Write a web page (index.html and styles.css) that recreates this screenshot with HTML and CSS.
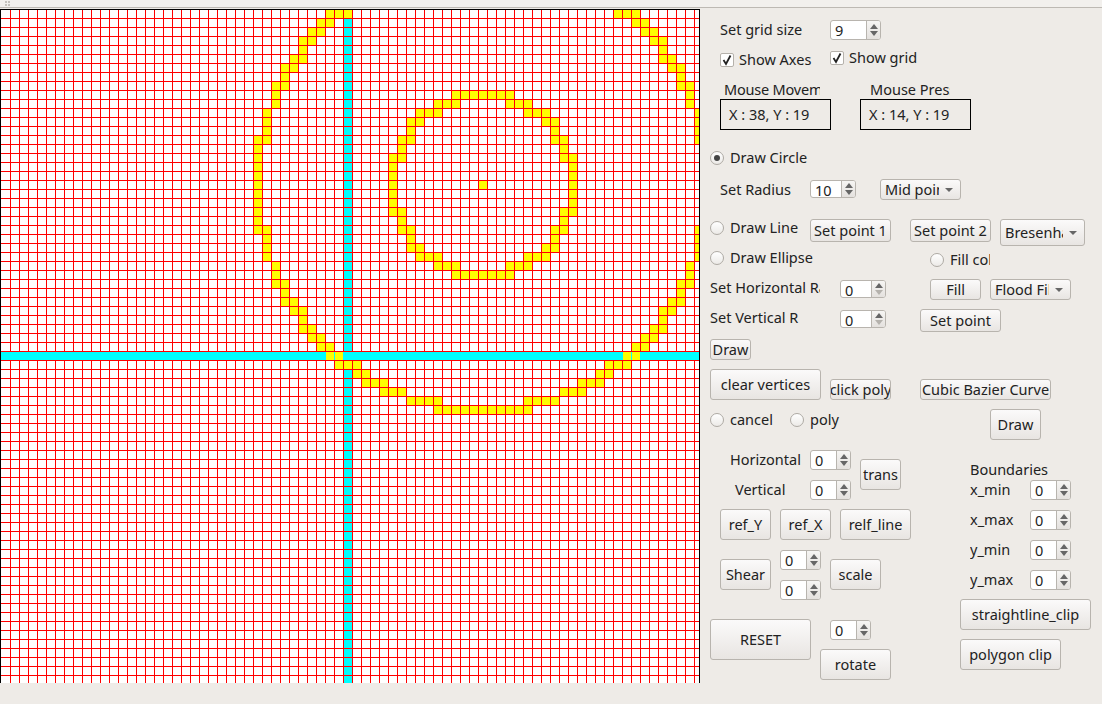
FILE: index.html
```html
<!DOCTYPE html>
<html lang="en">

<head>
    <meta charset="UTF-8">
    <title>Graphics</title>
    <link rel="stylesheet" href="styles.css">
</head>

<body>
    <div class="toolbar">
        <svg class="grip" width="6" height="7" viewBox="0 0 6 7">
            <rect x="0" y="0" width="2" height="2"/><rect x="3" y="0" width="2" height="2"/>
            <rect x="0" y="3" width="2" height="2"/><rect x="3" y="3" width="2" height="2"/>
        </svg>
    </div>
    <div class="main">
        <canvas id="frame" class="frame" width="700" height="674"></canvas>
        <div class="panel">
            <div class="label a-grid-label">Set grid size</div>
            <div class="spin a-grid-spin"><span class="val">9</span><span class="arrows"><i class="up"></i><i class="down"></i></span></div>
            <div class="check a-axes"><span class="box"><svg width="12" height="12" viewBox="0 0 12 12"><path d="M2.5 6 L5 10 L9.5 1.5"/></svg></span>Show Axes</div>
            <div class="check a-showgrid"><span class="box"><svg width="12" height="12" viewBox="0 0 12 12"><path d="M2.5 6 L5 10 L9.5 1.5"/></svg></span>Show grid</div>

            <div class="label a-move-label">Mouse Movement</div>
            <div class="label a-press-label">Mouse Pressed</div>
            <div class="readout a-move">X : 38, Y : 19</div>
            <div class="readout a-press">X : 14, Y : 19</div>

            <div class="radio a-circle"><span class="dot on"></span>Draw Circle</div>
            <div class="label a-radius-label">Set Radius</div>
            <div class="spin short a-radius-spin"><span class="val">10</span><span class="arrows"><i class="up"></i><i class="down"></i></span></div>
            <div class="combo a-circle-algo"><span class="combo-text">Mid point</span><i class="drop"></i></div>

            <div class="radio a-line"><span class="dot"></span>Draw Line</div>
            <div class="btn tall a-point1">Set point 1</div>
            <div class="btn tall a-point2">Set point 2</div>
            <div class="combo a-line-algo"><span class="combo-text">Bresenham</span><i class="drop"></i></div>
            <div class="radio a-ellipse"><span class="dot"></span>Draw Ellipse</div>
            <div class="radio a-fillcol"><span class="dot"></span>Fill color</div>

            <div class="label a-hr-label">Set Horizontal Radius</div>
            <div class="spin short at-min a-hr-spin"><span class="val">0</span><span class="arrows"><i class="up"></i><i class="down"></i></span></div>
            <div class="btn a-fill">Fill</div>
            <div class="combo a-fill-algo"><span class="combo-text">Flood Fill</span><i class="drop"></i></div>
            <div class="label a-vr-label">Set Vertical R</div>
            <div class="spin short at-min a-vr-spin"><span class="val">0</span><span class="arrows"><i class="up"></i><i class="down"></i></span></div>
            <div class="btn tall a-setpoint">Set point</div>
            <div class="btn a-draw1">Draw</div>

            <div class="btn a-clear">clear vertices</div>
            <div class="btn a-clickpoly">click poly</div>
            <div class="btn a-cubic">Cubic Bazier Curve</div>
            <div class="radio a-cancel"><span class="dot"></span>cancel</div>
            <div class="radio a-poly"><span class="dot"></span>poly</div>
            <div class="btn a-draw2">Draw</div>

            <div class="label a-h-label">Horizontal</div>
            <div class="spin a-h-spin"><span class="val">0</span><span class="arrows"><i class="up"></i><i class="down"></i></span></div>
            <div class="label a-v-label">Vertical</div>
            <div class="spin a-v-spin"><span class="val">0</span><span class="arrows"><i class="up"></i><i class="down"></i></span></div>
            <div class="btn a-trans">trans</div>

            <div class="label a-bound">Boundaries</div>
            <div class="label a-xmin-label">x_min</div>
            <div class="spin a-xmin"><span class="val">0</span><span class="arrows"><i class="up"></i><i class="down"></i></span></div>
            <div class="label a-xmax-label">x_max</div>
            <div class="spin a-xmax"><span class="val">0</span><span class="arrows"><i class="up"></i><i class="down"></i></span></div>
            <div class="label a-ymin-label">y_min</div>
            <div class="spin a-ymin"><span class="val">0</span><span class="arrows"><i class="up"></i><i class="down"></i></span></div>
            <div class="label a-ymax-label">y_max</div>
            <div class="spin a-ymax"><span class="val">0</span><span class="arrows"><i class="up"></i><i class="down"></i></span></div>

            <div class="btn a-refy">ref_Y</div>
            <div class="btn a-refx">ref_X</div>
            <div class="btn a-refl">relf_line</div>
            <div class="btn a-shear">Shear</div>
            <div class="spin a-shear1"><span class="val">0</span><span class="arrows"><i class="up"></i><i class="down"></i></span></div>
            <div class="spin a-shear2"><span class="val">0</span><span class="arrows"><i class="up"></i><i class="down"></i></span></div>
            <div class="btn a-scale">scale</div>
            <div class="btn a-reset">RESET</div>
            <div class="spin a-rot-spin"><span class="val">0</span><span class="arrows"><i class="up"></i><i class="down"></i></span></div>
            <div class="btn a-rotate">rotate</div>
            <div class="btn a-sclip">straightline_clip</div>
            <div class="btn a-pclip">polygon clip</div>
        </div>
    </div>
    <script src="script.js"></script>
</body>

</html>
```
FILE: styles.css
```css
* {
    margin: 0;
    padding: 0;
    box-sizing: border-box;
}

html, body {
    height: 100%;
    overflow: hidden;
}

body {
    background: #eeebe7;
    color: #222;
    font-family: "Noto Sans", "Liberation Sans", sans-serif;
    font-size: 14.5px;
}

.toolbar {
    height: 9px;
    background: #f2f0ed;
    box-shadow: inset 0 -1px 0 #eeebe7, inset 0 -2px 0 #bdb9b3;
    padding: 1px 0 0 5px;
}

.grip {
    display: block;
    fill: #c4c1bc;
}

.main {
    display: flex;
}

.frame {
    display: block;
    flex: none;
    width: 700px;
    height: 674px;
}

/* designer grid: every track is 10px, line n = 690+10n across, 10n down */
.panel {
    flex: none;
    width: 402px;
    padding-top: 1px;
    display: grid;
    grid-template-columns: repeat(40, 10px);
    grid-template-rows: repeat(68, 10px);
}

.label, .check, .radio {
    display: flex;
    align-items: center;
    padding-bottom: 2px;
    white-space: nowrap;
    overflow: hidden;
}

.check .box {
    flex: none;
    width: 14px;
    height: 14px;
    margin: 2px 5px 0 0;
    background: #fff;
    border: 1px solid #b5b1ab;
    border-radius: 2px;
    display: flex;
    align-items: center;
    justify-content: center;
}

.check svg {
    fill: none;
    stroke: #222;
    stroke-width: 1.8;
}

.radio .dot {
    flex: none;
    width: 14px;
    height: 14px;
    margin: 2px 6px 0 0;
    border: 1px solid #aeaaa4;
    border-radius: 50%;
    background: linear-gradient(#fff, #eceae7);
    display: flex;
    align-items: center;
    justify-content: center;
}

.radio .dot.on::after {
    content: "";
    width: 6px;
    height: 6px;
    border-radius: 50%;
    background: #444;
}

.readout {
    margin: -1px -1px 0 0;
    padding: 0 0 2px 8px;
    border: 1px solid #000;
    display: flex;
    align-items: center;
    white-space: nowrap;
}

.btn {
    margin: -1px -1px 0 0;
    padding-bottom: 2px;
    border: 1px solid #b8b4ae;
    border-radius: 3px;
    background: linear-gradient(#fbfafa, #e8e5e2);
    display: flex;
    align-items: center;
    justify-content: center;
    white-space: nowrap;
    overflow: hidden;
}

.btn.tall {
    margin-bottom: -2px;
}

.combo {
    margin: -1px -1px 0 0;
    padding-left: 4px;
    border: 1px solid #b8b4ae;
    border-radius: 3px;
    background: linear-gradient(#fbfafa, #e8e5e2);
    display: flex;
    align-items: center;
    white-space: nowrap;
}

.combo-text {
    flex: 1;
    overflow: hidden;
    padding-bottom: 2px;
}

.combo .drop {
    flex: none;
    margin: 0 7px 0 6px;
    border-left: 4px solid transparent;
    border-right: 4px solid transparent;
    border-top: 4px solid #666;
}

.spin {
    margin-right: -1px;
    border: 1px solid #b8b4ae;
    border-radius: 3px;
    background: #fff;
    display: flex;
    overflow: hidden;
}

.spin.short {
    justify-self: start;
    align-self: start;
    width: 46px;
    height: 18px;
}

.spin .val {
    flex: 1;
    padding-left: 4px;
    line-height: 19px;
}

.spin .arrows {
    flex: none;
    width: 14px;
    border-left: 1px solid #b8b4ae;
    background: linear-gradient(#f6f5f3, #e4e1de);
    display: flex;
    flex-direction: column;
    align-items: center;
    justify-content: center;
    gap: 2px;
}

.spin i {
    border-left: 4px solid transparent;
    border-right: 4px solid transparent;
}

.spin .up {
    border-bottom: 5px solid #666;
}

.spin .down {
    border-top: 5px solid #666;
}

.spin.at-min .down {
    border-top-color: #b5b2ad;
}

/* widget places */
.a-grid-label { grid-area: 2 / 3 / 4 / 12; }
.a-grid-spin { grid-area: 2 / 14 / 4 / 19; }
.a-axes { grid-area: 5 / 3 / 7 / 14; }
.a-showgrid { grid-area: 5 / 14 / 7 / 25; margin-top: -4px; }
.a-move-label { grid-area: 8 / 3 / 10 / 13; padding-left: 4px; letter-spacing: -0.2px; }
.a-press-label { grid-area: 8 / 18 / 10 / 26; }
.a-move { grid-area: 10 / 3 / 13 / 14; }
.a-press { grid-area: 10 / 17 / 13 / 28; }

.a-circle { grid-area: 15 / 2 / 17 / 14; margin-top: -4px; }
.a-radius-label { grid-area: 18 / 3 / 20 / 11; }
.a-radius-spin { grid-area: 18 / 12 / 20 / 17; }
.a-circle-algo { grid-area: 18 / 19 / 20 / 27; }

.a-line { grid-area: 22 / 2 / 24 / 12; margin-top: -4px; }
.a-point1 { grid-area: 22 / 12 / 24 / 20; }
.a-point2 { grid-area: 22 / 22 / 24 / 30; }
.a-line-algo { grid-area: 22 / 31 / 25 / 40; margin-right: 5px; margin-bottom: 4px; }
.a-ellipse { grid-area: 25 / 2 / 27 / 14; margin-top: -4px; }
.a-fillcol { grid-area: 25 / 24 / 27 / 30; }

.a-hr-label { grid-area: 28 / 2 / 30 / 13; margin-top: -4px; }
.a-hr-spin { grid-area: 28 / 15 / 30 / 20; }
.a-fill { grid-area: 28 / 24 / 30 / 29; }
.a-fill-algo { grid-area: 28 / 30 / 30 / 38; }
.a-vr-label { grid-area: 31 / 2 / 33 / 13; margin-top: -4px; }
.a-vr-spin { grid-area: 31 / 15 / 33 / 20; }
.a-setpoint { grid-area: 31 / 23 / 33 / 31; }
.a-draw1 { grid-area: 34 / 2 / 36 / 6; }

.a-clear { grid-area: 37 / 2 / 40 / 13; }
.a-clickpoly { grid-area: 38 / 14 / 40 / 20; }
.a-cubic { grid-area: 38 / 23 / 40 / 36; }
.a-cancel { grid-area: 41 / 2 / 43 / 10; }
.a-poly { grid-area: 41 / 10 / 43 / 17; }
.a-draw2 { grid-area: 41 / 30 / 44 / 35; }

.a-h-label { grid-area: 45 / 4 / 47 / 12; }
.a-h-spin { grid-area: 45 / 12 / 47 / 16; }
.a-v-label { grid-area: 48 / 4 / 50 / 12; padding-left: 5px; }
.a-v-spin { grid-area: 48 / 12 / 50 / 16; }
.a-trans { grid-area: 46 / 17 / 49 / 21; }

.a-bound { grid-area: 46 / 28 / 48 / 37; }
.a-xmin-label { grid-area: 48 / 28 / 50 / 34; }
.a-xmin { grid-area: 48 / 34 / 50 / 38; }
.a-xmax-label { grid-area: 51 / 28 / 53 / 34; }
.a-xmax { grid-area: 51 / 34 / 53 / 38; }
.a-ymin-label { grid-area: 54 / 28 / 56 / 34; }
.a-ymin { grid-area: 54 / 34 / 56 / 38; }
.a-ymax-label { grid-area: 57 / 28 / 59 / 34; }
.a-ymax { grid-area: 57 / 34 / 59 / 38; }

.a-refy { grid-area: 51 / 3 / 54 / 8; }
.a-refx { grid-area: 51 / 9 / 54 / 14; }
.a-refl { grid-area: 51 / 15 / 54 / 22; }
.a-shear { grid-area: 56 / 3 / 59 / 8; }
.a-shear1 { grid-area: 55 / 9 / 57 / 13; }
.a-shear2 { grid-area: 58 / 9 / 60 / 13; }
.a-scale { grid-area: 56 / 14 / 59 / 19; }
.a-reset { grid-area: 62 / 2 / 66 / 12; }
.a-rot-spin { grid-area: 62 / 14 / 64 / 18; }
.a-rotate { grid-area: 65 / 13 / 68 / 20; }
.a-sclip { grid-area: 60 / 27 / 63 / 40; }
.a-pclip { grid-area: 64 / 27 / 67 / 37; }
```
FILE: script.js
```js
var canvas = document.getElementById("frame");
var ctx = canvas.getContext("2d");
var size = 9;

// one octant of each circle, the other seven are mirrors of it
var bigOctant = [[25, 0], [25, 1], [25, 2], [25, 3], [25, 4], [25, 5], [24, 5], [24, 6], [24, 7], [24, 8],
    [23, 9], [23, 10], [23, 11], [22, 11], [22, 12], [22, 13], [21, 13], [21, 14], [20, 14], [20, 15],
    [20, 16], [19, 16], [19, 17], [18, 17], [18, 18]];
var smallOctant = [[10, 0], [10, 1], [10, 2], [10, 3], [9, 3], [9, 4], [9, 5], [8, 5], [8, 6], [8, 7], [7, 7]];

// cell interior, col 0 starts at x=2, row 0 starts at y=1
function cell(c, r, color) {
    ctx.fillStyle = color;
    ctx.fillRect(2 + c * size, 1 + r * size, size - 1, size - 1);
}

function circle(cx, cy, octant) {
    for (var i = 0; i < octant.length; i++) {
        var x = octant[i][0], y = octant[i][1];
        var pts = [[x, y], [-x, y], [x, -y], [-x, -y], [y, x], [-y, x], [y, -x], [-y, -x]];
        for (var j = 0; j < pts.length; j++) {
            cell(cx + pts[j][0], cy + pts[j][1], "#ffff00");
        }
    }
}

ctx.fillStyle = "#fff";
ctx.fillRect(0, 0, 700, 674);

// vertical lines
ctx.fillStyle = "#ff0000";
for (var x = 10; x < 700; x += size) {
    ctx.fillRect(x, 0, 1, 674);
}

// x axis goes over the vertical lines
ctx.fillStyle = "#00ffff";
ctx.fillRect(0, 1 + 38 * size, 700, size - 1);

// horizontal lines
ctx.fillStyle = "#ff0000";
for (var y = 0; y < 674; y += size) {
    ctx.fillRect(0, y, 700, 1);
}

// y axis
for (var r = 0; r < 75; r++) {
    cell(38, r, "#00ffff");
}

circle(53, 19, bigOctant);
circle(53, 19, smallOctant);
cell(53, 19, "#ffff00");
// top row of the big circle
cell(38, 0, "#ffff00");
cell(68, 0, "#ffff00");

// frame edge
ctx.fillStyle = "#000";
ctx.fillRect(0, 0, 700, 1);
ctx.fillRect(0, 0, 1, 674);
ctx.fillRect(699, 0, 1, 674);
```
